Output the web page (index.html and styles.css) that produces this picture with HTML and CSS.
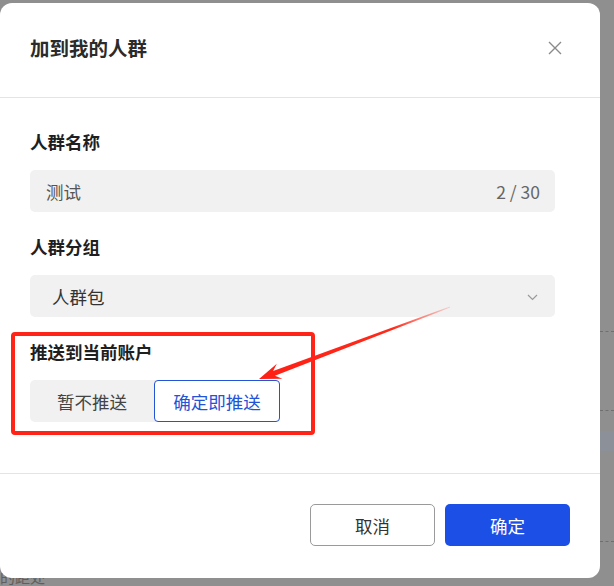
FILE: index.html
```html
<!DOCTYPE html>
<html lang="zh-CN">
<head>
<meta charset="utf-8">
<title>加到我的人群</title>
<link rel="stylesheet" href="styles.css">
</head>
<body>
<div class="backdrop">
  <div class="bg-line l1"></div>
  <div class="bg-line l2"></div>
  <div class="bg-band"></div>
  <div class="bg-line l3"></div>
  <div class="bg-text">的距处</div>
</div>
<div class="modal">
  <div class="modal-header">
    <div class="modal-title">加到我的人群</div>
    <svg class="close" width="14" height="14" viewBox="0 0 14 14"><path d="M1 1L13 13M13 1L1 13" stroke="#8a8a8a" stroke-width="1.4" fill="none"/></svg>
  </div>
  <div class="modal-body">
    <div class="label">人群名称</div>
    <div class="field input">
      <span class="value">测试</span>
      <span class="count">2 / 30</span>
    </div>
    <div class="label label-2">人群分组</div>
    <div class="field select">
      <span class="value">人群包</span>
      <svg class="chev" width="11" height="7" viewBox="0 0 11 7"><path d="M1 1L5.5 5.5L10 1" stroke="#9a9a9a" stroke-width="1.2" fill="none"/></svg>
    </div>
    <div class="push-section">
      <div class="label">推送到当前账户</div>
      <div class="segmented">
        <div class="seg">暂不推送</div>
        <div class="seg seg-active">确定即推送</div>
      </div>
    </div>
  </div>
  <div class="modal-footer">
    <div class="btn btn-cancel">取消</div>
    <div class="btn btn-ok">确定</div>
  </div>
</div>
<svg class="annot" width="614" height="586" viewBox="0 0 614 586">
  <defs>
    <linearGradient id="fade" x1="450" y1="307" x2="259" y2="379" gradientUnits="userSpaceOnUse">
      <stop offset="0" stop-color="#ff2a1a" stop-opacity="0.15"/>
      <stop offset="0.3" stop-color="#ff2a1a" stop-opacity="1"/>
      <stop offset="1" stop-color="#ff2015" stop-opacity="1"/>
    </linearGradient>
  </defs>
  <polygon points="259,379 282.4,378.7 274.9,375.7 450.2,307.6 449.8,306.4 273.1,371 276.8,363.7" fill="url(#fade)"/>
</svg>
</body>
</html>
```

FILE: styles.css
```css
html, body {
  margin: 0;
  padding: 0;
}
body {
  width: 614px;
  height: 586px;
  overflow: hidden;
  background: #8f8f8f;
  font-family: "Noto Sans CJK SC", "Noto Sans", "Liberation Sans", sans-serif;
  position: relative;
}
.backdrop {
  position: absolute;
  inset: 0;
}
.bg-line {
  position: absolute;
  left: 600px;
  width: 14px;
  border-top: 1px dashed #6f6f6f;
}
.l1 { top: 331px; }
.l2 { top: 410px; }
.l3 { top: 541px; }
.bg-band {
  position: absolute;
  left: 600px;
  top: 431px;
  width: 14px;
  height: 20px;
  background: #8b9099;
}
.bg-text {
  position: absolute;
  left: 0;
  top: 569px;
  font-size: 15px;
  line-height: 16px;
  color: #5e5e5e;
}
.modal {
  position: relative;
  margin-top: 3px;
  width: 600px;
  height: 575px;
  background: #fff;
  border-radius: 12px;
  box-sizing: border-box;
  display: flex;
  flex-direction: column;
}
.modal-header {
  height: 95px;
  box-sizing: border-box;
  padding: 31px 38px 0 30px;
  border-bottom: 1px solid #e4e4e4;
  display: flex;
  justify-content: space-between;
  align-items: flex-start;
}
.modal-title {
  font-size: 19.5px;
  line-height: 28px;
  font-weight: 700;
  color: #2b2b2b;
}
.close {
  margin-top: 7px;
}
.modal-body {
  padding: 32px 45px 38px 30px;
  border-bottom: 1px solid #e4e4e4;
}
.label {
  font-size: 17.5px;
  line-height: 24px;
  font-weight: 700;
  color: #1f1f1f;
}
.label-2 {
  margin-top: 23px;
}
.field {
  margin-top: 16px;
  height: 42px;
  background: #f1f1f1;
  border-radius: 5px;
  display: flex;
  align-items: center;
  justify-content: space-between;
  box-sizing: border-box;
  font-size: 17.5px;
  color: #555;
}
.input {
  padding: 0 15px 0 16px;
}
.count {
  color: #666;
}
.select {
  padding: 0 17px 0 22px;
  color: #333;
}
.chev {
  margin-top: 2px;
}
.push-section {
  margin: 15px 0 0 -19px;
  width: 304px;
  box-sizing: border-box;
  border: 4px solid #ff2417;
  border-radius: 4px;
  padding: 4px 0 9px 15px;
}
.segmented {
  margin-top: 16px;
  display: flex;
  width: 250px;
  height: 42px;
  background: #f1f1f1;
  border-radius: 5px;
}
.seg {
  flex: 1;
  display: flex;
  align-items: center;
  justify-content: center;
  font-size: 17.5px;
  color: #444;
  box-sizing: border-box;
}
.seg-active {
  background: #fff;
  border: 1px solid #2353d6;
  border-radius: 4px;
  color: #2353d6;
}
.modal-footer {
  padding: 30px 30px 0 0;
  display: flex;
  justify-content: flex-end;
  gap: 10px;
}
.btn {
  width: 125px;
  height: 42px;
  box-sizing: border-box;
  border-radius: 5px;
  display: flex;
  align-items: center;
  justify-content: center;
  font-size: 17.5px;
}
.btn-cancel {
  border: 1px solid #9a9a9a;
  color: #333;
}
.btn-ok {
  background: #1b4fe6;
  color: #fff;
}
.annot {
  position: absolute;
  left: 0;
  top: 0;
  pointer-events: none;
}
```
